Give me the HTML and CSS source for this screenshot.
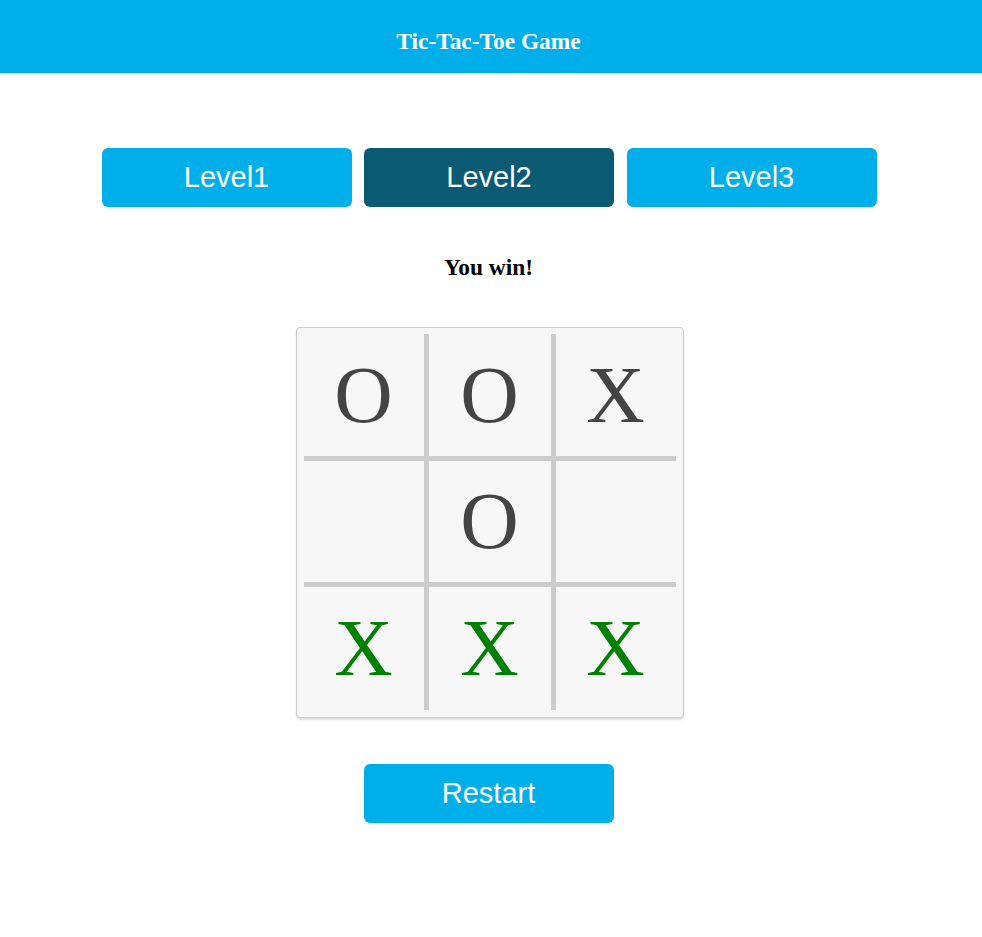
FILE: index.html
```html
<!DOCTYPE html>
<html>
<head>
<meta charset="utf-8">
<title>Tic-Tac-Toe Game</title>
<link rel="stylesheet" href="styles.css">
</head>
<body>
<header class="topbar">
  <h1 class="title">Tic-Tac-Toe Game</h1>
</header>
<main class="main">
  <div class="levels">
    <button class="btn">Level1</button>
    <button class="btn btn-active">Level2</button>
    <button class="btn">Level3</button>
  </div>
  <p class="status">You win!</p>
  <div class="board-wrap">
    <div class="board">
      <div class="cell">O</div>
      <div class="cell">O</div>
      <div class="cell">X</div>
      <div class="cell"></div>
      <div class="cell">O</div>
      <div class="cell"></div>
      <div class="cell win">X</div>
      <div class="cell win">X</div>
      <div class="cell win">X</div>
    </div>
  </div>
  <button class="btn restart">Restart</button>
</main>
</body>
</html>
```
FILE: styles.css
```css
html, body {
  margin: 0;
  padding: 0;
  background: #fff;
}
body {
  font-family: "Liberation Serif", "Times New Roman", serif;
}
.topbar {
  background: #00afea;
  height: 73px;
  display: flex;
  align-items: center;
  justify-content: center;
  padding-right: 5px;
  box-sizing: border-box;
}
.title {
  margin: 9px 0 0 0;
  color: #fff;
  font-size: 23.4px;
  font-weight: bold;
}
.main {
  display: flex;
  flex-direction: column;
  align-items: center;
  padding-right: 5px;
  padding-top: 75px;
}
.levels {
  display: flex;
  gap: 12.5px;
  margin-left: 1px;
}
.btn {
  width: 250px;
  height: 59px;
  border: none;
  border-radius: 6px;
  background: #00afea;
  color: #fff;
  font-family: "Liberation Sans", Arial, sans-serif;
  font-size: 29px;
  padding: 0;
  cursor: pointer;
}
.btn-active {
  background: #0b5a73;
}
.status {
  margin: 47px 0 0 0;
  font-size: 23.4px;
  font-weight: bold;
  color: #000;
  line-height: 26px;
}
.board-wrap {
  margin-top: 47px;
  margin-left: 2px;
  background: #f7f7f7;
  border: 1px solid #cccccc;
  border-radius: 4px;
  box-shadow: 0 2px 2px rgba(0,0,0,0.12);
  padding: 6px 7px 7px 7px;
}
.board {
  display: grid;
  grid-template-columns: 120px 122px 120px;
  grid-template-rows: 122px 121px 123px;
  gap: 5px;
  background: #cccccc;
}
.cell {
  background: #f7f7f7;
  display: flex;
  align-items: center;
  justify-content: center;
  font-size: 81px;
  color: #444444;
  line-height: 1;
}
.cell.win {
  color: #008000;
}
.restart {
  margin-top: 46px;
}
```
